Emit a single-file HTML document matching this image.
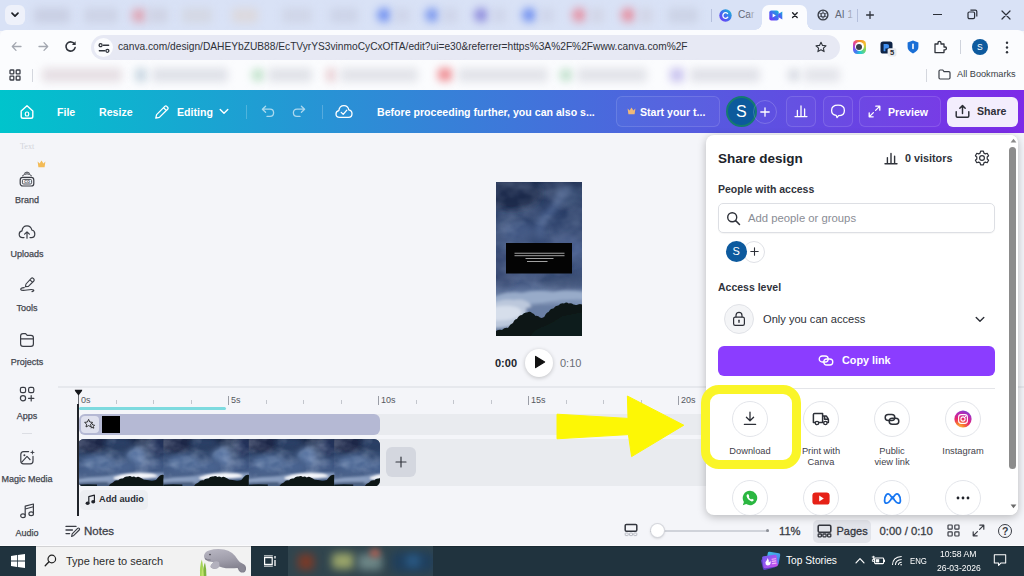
<!DOCTYPE html>
<html>
<head>
<meta charset="utf-8">
<style>
*{box-sizing:border-box;margin:0;padding:0}
html,body{width:1024px;height:576px;overflow:hidden}
body{font-family:"Liberation Sans",sans-serif;background:#f4f5f9;position:relative;color:#222}
.abs{position:absolute}
.t{position:absolute;white-space:nowrap;line-height:1}
/* browser chrome */
#tabbar{left:0;top:0;width:1024px;height:31px;background:#d9e2f6}
#toolbar{left:0;top:30px;width:1024px;height:31px;background:#fbfcfe;border-radius:6px 6px 0 0}
#bmbar{left:0;top:61px;width:1024px;height:29px;background:#fbfcfe}
#url{left:91px;top:34.5px;width:749px;height:25px;border-radius:12.5px;background:#e7e9f4}
.blur{position:absolute;filter:blur(4px);border-radius:4px}
/* canva header */
#chead{left:0;top:90px;width:1024px;height:43px;background:linear-gradient(90deg,#00c4cc 0%,#7d2ae8 100%)}
.hw{color:#fff;font-weight:bold;font-size:10.6px}
/* sidebar */
.sl{font-size:9px;color:#44474f;text-align:center;width:54px;left:0;-webkit-text-stroke:.25px #44474f}
/* taskbar */
#taskbar{left:0;top:546px;width:1024px;height:30px;background:#20333e;border-top:1px solid #1a2a33}
/* share panel */
#panel{left:706px;top:134.5px;width:312px;height:380.5px;background:#fff;border-radius:8px;box-shadow:0 2px 8px rgba(0,0,0,.25);overflow:hidden}
.ac{width:36px;height:36px;border-radius:18px;border:1px solid #e3e5ea;background:#fff}
.al{width:80px;text-align:center;font-size:9.3px;color:#3f424a}
.sx{transform-origin:0 50%}
.sb{-webkit-text-stroke:.3px currentColor}
</style>
</head>
<body>
<!-- ===== Browser chrome ===== -->
<div id="tabbar" class="abs"></div>
<!-- tab search button -->
<div class="abs" style="left:5px;top:5px;width:20px;height:20px;border-radius:6px;background:#eef1fa"></div>
<svg class="abs" style="left:10px;top:11px" width="10" height="8" viewBox="0 0 10 8"><path d="M2 2.2 L5 5.2 L8 2.2" fill="none" stroke="#1f2228" stroke-width="1.7" stroke-linecap="round" stroke-linejoin="round"/></svg>
<!-- blurred tabs -->
<div class="blur" style="left:34px;top:8px;width:36px;height:15px;background:#c9cfe3"></div>
<div class="blur" style="left:84px;top:8px;width:34px;height:15px;background:#cdd3e6"></div>
<div class="blur" style="left:132px;top:9px;width:14px;height:13px;background:#dfa7b6"></div>
<div class="blur" style="left:148px;top:8px;width:20px;height:15px;background:#cfd3e4"></div>
<div class="blur" style="left:182px;top:8px;width:30px;height:15px;background:#d4d8e4"></div>
<div class="blur" style="left:232px;top:8px;width:26px;height:15px;background:#dcd9de"></div>
<div class="blur" style="left:282px;top:8px;width:30px;height:15px;background:#d0d6e8"></div>
<div class="blur" style="left:330px;top:8px;width:28px;height:15px;background:#cdd4e8"></div>
<div class="blur" style="left:377px;top:8px;width:14px;height:14px;background:#6f8ff0;border-radius:7px"></div>
<div class="blur" style="left:394px;top:8px;width:16px;height:15px;background:#cfd5ea"></div>
<div class="blur" style="left:425px;top:8px;width:14px;height:14px;background:#7a97ee;border-radius:7px"></div>
<div class="blur" style="left:442px;top:8px;width:16px;height:15px;background:#cfd5ea"></div>
<div class="blur" style="left:474px;top:8px;width:14px;height:14px;background:#8d8bdc;border-radius:7px"></div>
<div class="blur" style="left:492px;top:8px;width:14px;height:15px;background:#cfd5ea"></div>
<div class="blur" style="left:522px;top:8px;width:14px;height:14px;background:#6f8ff0;border-radius:7px"></div>
<div class="blur" style="left:540px;top:8px;width:14px;height:15px;background:#cfd5ea"></div>
<div class="blur" style="left:572px;top:8px;width:14px;height:14px;background:#e592a4;border-radius:7px"></div>
<div class="blur" style="left:590px;top:8px;width:14px;height:15px;background:#d2d5e6"></div>
<div class="blur" style="left:621px;top:8px;width:14px;height:14px;background:#e68fa0;border-radius:7px"></div>
<div class="blur" style="left:639px;top:8px;width:14px;height:15px;background:#d2d5e6"></div>
<div class="blur" style="left:668px;top:8px;width:30px;height:15px;background:#ccd3e6"></div>
<!-- tab separators -->
<div class="abs" style="left:711px;top:9px;width:1px;height:13px;background:#b4bfdc"></div>
<div class="abs" style="left:857px;top:9px;width:1px;height:13px;background:#b4bfdc"></div>
<!-- tab "Car" -->
<svg class="abs" style="left:719px;top:9px" width="13" height="13" viewBox="0 0 13 13"><defs><linearGradient id="cg" x1="0" y1="1" x2="1" y2="0"><stop offset="0" stop-color="#7b2ff7"/><stop offset=".5" stop-color="#3f6ff0"/><stop offset="1" stop-color="#18c3cf"/></linearGradient></defs><circle cx="6.5" cy="6.5" r="6.2" fill="url(#cg)"/><path d="M8.6 4.6 A2.7 2.9 0 1 0 8.8 8.2" fill="none" stroke="#fff" stroke-width="1.3" stroke-linecap="round"/></svg>
<div class="t" style="left:738px;top:10px;font-size:10.2px;color:#626877">Car</div>
<div class="abs" style="left:748px;top:8px;width:8px;height:15px;background:linear-gradient(90deg,rgba(217,226,246,0),#d9e2f6)"></div>
<!-- active tab -->
<div class="abs" style="left:762px;top:5px;width:45px;height:26px;background:#fbfcfe;border-radius:7px 7px 0 0"></div>
<div class="abs" style="left:755px;top:23px;width:7px;height:7px;background:radial-gradient(circle at 0 0,rgba(0,0,0,0) 6.5px,#fbfcfe 7px)"></div>
<div class="abs" style="left:807px;top:23px;width:7px;height:7px;background:radial-gradient(circle at 100% 0,rgba(0,0,0,0) 6.5px,#fbfcfe 7px)"></div>
<svg class="abs" style="left:769px;top:10px" width="14" height="11" viewBox="0 0 14 11"><defs><linearGradient id="vg" x1="0" y1="1" x2="1" y2="0"><stop offset="0" stop-color="#7b2ff7"/><stop offset=".55" stop-color="#3f6ff0"/><stop offset="1" stop-color="#16b9d4"/></linearGradient></defs><rect x="0.3" y="0.6" width="9.4" height="9.8" rx="2" fill="url(#vg)"/><path d="M9.2 4 L13.3 1.4 V9.6 L9.2 7 Z" fill="url(#vg)"/><path d="M3.6 3.4 L6.8 5.5 L3.6 7.6 Z" fill="#fff"/></svg>
<svg class="abs" style="left:790px;top:10px" width="10" height="10" viewBox="0 0 10 10"><path d="M2.6 2.8 L7.2 7.4 M7.2 2.8 L2.6 7.4" stroke="#1f2228" stroke-width="1.4" stroke-linecap="round"/></svg>
<!-- tab "AI 1" -->
<svg class="abs" style="left:817px;top:9px" width="12" height="12" viewBox="0 0 12 12"><circle cx="6" cy="6" r="4.9" fill="none" stroke="#3b3f49" stroke-width="1.4"/><circle cx="6" cy="6" r="2" fill="none" stroke="#3b3f49" stroke-width="1.1"/><path d="M6 1 V4 M6 8 V11 M1.4 3.5 L4.2 5 M7.8 7 L10.6 8.5 M1.4 8.5 L4.2 7 M7.8 5 L10.6 3.5" stroke="#3b3f49" stroke-width=".8"/></svg>
<div class="t" style="left:835px;top:10px;font-size:10.2px;color:#626877">AI 1</div>
<div class="abs" style="left:846px;top:8px;width:8px;height:15px;background:linear-gradient(90deg,rgba(217,226,246,0),#d9e2f6)"></div>
<!-- new tab + -->
<svg class="abs" style="left:865px;top:10px" width="10" height="10" viewBox="0 0 10 10"><path d="M5 1.6 V8.4 M1.6 5 H8.4" stroke="#30343d" stroke-width="1.3" stroke-linecap="round"/></svg>
<!-- window controls -->
<div class="abs" style="left:933px;top:14px;width:9px;height:1.3px;background:#2b2f38"></div>
<svg class="abs" style="left:967px;top:9px" width="11" height="11" viewBox="0 0 11 11"><rect x="1" y="3" width="6.6" height="6.6" rx="1.3" fill="none" stroke="#2b2f38" stroke-width="1.2"/><path d="M3.4 1.2 H8.4 Q9.8 1.2 9.8 2.6 V7.4" fill="none" stroke="#2b2f38" stroke-width="1.2"/></svg>
<svg class="abs" style="left:1001px;top:10px" width="10" height="10" viewBox="0 0 10 10"><path d="M1 1 L9 9 M9 1 L1 9" stroke="#2b2f38" stroke-width="1.2" stroke-linecap="round"/></svg>

<div id="toolbar" class="abs"></div>
<div id="bmbar" class="abs"></div>
<!-- nav buttons -->
<svg class="abs" style="left:11px;top:41px" width="11" height="11" viewBox="0 0 11 11"><path d="M10 5.5 H1.5 M5 1.6 L1.3 5.5 L5 9.4" fill="none" stroke="#a3a7b0" stroke-width="1.3" stroke-linecap="round" stroke-linejoin="round"/></svg>
<svg class="abs" style="left:38px;top:41px" width="11" height="11" viewBox="0 0 11 11"><path d="M1 5.5 H9.5 M6 1.6 L9.7 5.5 L6 9.4" fill="none" stroke="#a3a7b0" stroke-width="1.3" stroke-linecap="round" stroke-linejoin="round"/></svg>
<svg class="abs" style="left:64px;top:40px" width="13" height="13" viewBox="0 0 13 13"><path d="M10.6 4.2 A4.6 4.6 0 1 0 11.1 7.6" fill="none" stroke="#2f333b" stroke-width="1.6" stroke-linecap="round"/><path d="M11.6 1.3 V5 H7.9 Z" fill="#2f333b"/></svg>
<div id="url" class="abs"></div>
<div class="abs" style="left:94px;top:38px;width:19px;height:19px;border-radius:10px;background:#fbfcfe"></div>
<svg class="abs" style="left:97.5px;top:41.5px" width="12" height="12" viewBox="0 0 12 12"><path d="M5.4 3.2 H10.6 M1.4 8.8 H6.6" stroke="#2f333b" stroke-width="1.5" stroke-linecap="round"/><circle cx="2.6" cy="3.2" r="1.5" fill="none" stroke="#2f333b" stroke-width="1.3"/><circle cx="9.4" cy="8.8" r="1.5" fill="none" stroke="#2f333b" stroke-width="1.3"/></svg>
<div class="t" style="left:118px;top:42px;font-size:10.2px;color:#2e3138">canva.com/design/DAHEYbZUB88/EcTVyrYS3vinmoCyCxOfTA/edit?ui=e30&amp;referrer=https%3A%2F%2Fwww.canva.com%2F</div>
<svg class="abs" style="left:815px;top:41px" width="12" height="12" viewBox="0 0 12 12"><path d="M6 1.2 L7.5 4.4 L11 4.8 L8.4 7.1 L9.1 10.6 L6 8.8 L2.9 10.6 L3.6 7.1 L1 4.8 L4.5 4.4 Z" fill="none" stroke="#2f333b" stroke-width="1.1" stroke-linejoin="round"/></svg>
<!-- extensions -->
<div class="abs" style="left:852.5px;top:40px;width:13.5px;height:13.5px;border-radius:4.2px;background:conic-gradient(from 0deg,#f5902a,#f2c230 18%,#7fd45a 32%,#25cfd0 48%,#3f7df0 60%,#8a4bf0 72%,#e83f8e 86%,#f5902a)"></div>
<div class="abs" style="left:854.6px;top:42.1px;width:9.3px;height:9.3px;border-radius:5px;background:#fff"></div>
<div class="abs" style="left:856.1px;top:43.6px;width:6.3px;height:6.3px;border-radius:4px;background:#3a3f4a"></div>
<svg class="abs" style="left:879.5px;top:40.5px" width="17" height="16" viewBox="0 0 17 16"><rect x=".5" y=".4" width="12" height="12.2" rx="2.6" fill="#0d2345"/><path d="M3.6 3 H6.8 Q9.2 3 9.2 5.2 Q9.2 7.4 6.8 7.4 H5.4 V10.2 H3.6 Z" fill="#3f8ff0"/><rect x="7.6" y="7.2" width="8.8" height="8.2" rx="1.6" fill="#e8eaee"/><text x="12" y="14.2" font-family="Liberation Sans" font-size="7.6" font-weight="bold" text-anchor="middle" fill="#26282e">5</text></svg>
<svg class="abs" style="left:907px;top:40px" width="12" height="14" viewBox="0 0 12 14"><path d="M6 .6 L11.4 2.6 V7 Q11.4 11 6 13.4 Q.6 11 .6 7 V2.6 Z" fill="#1a6fd6"/><rect x="5.2" y="3.6" width="1.6" height="5.6" rx=".8" fill="#fff"/></svg>
<svg class="abs" style="left:933px;top:40px" width="14" height="14" viewBox="0 0 14 14"><path d="M2 4 H5 V3 Q5 1.4 6.5 1.4 Q8 1.4 8 3 V4 H11 V7 H12 Q13.4 7 13.4 8.4 Q13.4 9.8 12 9.8 H11 V12.6 H2 Z" fill="none" stroke="#2f333b" stroke-width="1.3" stroke-linejoin="round"/></svg>
<div class="abs" style="left:960px;top:40px;width:1px;height:14px;background:#cfd3dc"></div>
<div class="abs" style="left:972px;top:39px;width:16px;height:16px;border-radius:8px;background:#0d5a9e"></div>
<div class="t" style="left:977px;top:43px;font-size:8.5px;color:#fff">S</div>
<svg class="abs" style="left:1005px;top:41px" width="4" height="13" viewBox="0 0 4 13"><circle cx="2" cy="1.8" r="1.2" fill="#2f333b"/><circle cx="2" cy="6.5" r="1.2" fill="#2f333b"/><circle cx="2" cy="11.2" r="1.2" fill="#2f333b"/></svg>
<!-- bookmarks bar -->
<svg class="abs" style="left:9px;top:69px" width="12" height="12" viewBox="0 0 12 12"><g fill="none" stroke="#3a3e47" stroke-width="1.3"><rect x="1" y="1" width="3.8" height="3.8" rx=".6"/><rect x="7.2" y="1" width="3.8" height="3.8" rx=".6"/><rect x="1" y="7.2" width="3.8" height="3.8" rx=".6"/><rect x="7.2" y="7.2" width="3.8" height="3.8" rx=".6"/></g></svg>
<div class="abs" style="left:32px;top:69px;width:1px;height:13px;background:#d4d7de"></div>
<div class="blur" style="left:42px;top:68px;width:80px;height:14px;background:#e6dfe4"></div>
<div class="blur" style="left:135px;top:68px;width:12px;height:14px;background:#c9d7e2"></div>
<div class="blur" style="left:152px;top:68px;width:76px;height:14px;background:#dfe1e8"></div>
<div class="blur" style="left:252px;top:69px;width:12px;height:12px;background:#bfe2c9"></div>
<div class="blur" style="left:268px;top:68px;width:44px;height:14px;background:#e0e2e8"></div>
<div class="blur" style="left:326px;top:68px;width:10px;height:14px;background:#e9cfd4"></div>
<div class="blur" style="left:340px;top:68px;width:78px;height:14px;background:#e2e3e9"></div>
<div class="blur" style="left:438px;top:68px;width:14px;height:13px;background:#ef8c92"></div>
<div class="blur" style="left:458px;top:68px;width:90px;height:14px;background:#e2e3e9"></div>
<div class="blur" style="left:560px;top:69px;width:12px;height:12px;background:#bfe0cb"></div>
<div class="blur" style="left:577px;top:68px;width:70px;height:14px;background:#e2e3e9"></div>
<div class="blur" style="left:670px;top:68px;width:14px;height:14px;background:#c9c3ee"></div>
<div class="blur" style="left:690px;top:68px;width:70px;height:14px;background:#e0e1e8"></div>
<div class="blur" style="left:788px;top:69px;width:12px;height:12px;background:#d7dae2"></div>
<div class="blur" style="left:804px;top:68px;width:36px;height:14px;background:#e3e4ea"></div>
<div class="abs" style="left:926px;top:69px;width:1px;height:13px;background:#d4d7de"></div>
<svg class="abs" style="left:938px;top:69px" width="13" height="11" viewBox="0 0 13 11"><path d="M1 2.2 Q1 1 2.2 1 H4.8 L6 2.6 H10.8 Q12 2.6 12 3.8 V8.8 Q12 10 10.8 10 H2.2 Q1 10 1 8.8 Z" fill="none" stroke="#3a3e47" stroke-width="1.2" stroke-linejoin="round"/></svg>
<div class="t" style="left:957px;top:70px;font-size:9.2px;color:#3a3e47">All Bookmarks</div>

<!-- ===== Canva header ===== -->
<div id="chead" class="abs"></div>
<!-- home -->
<svg class="abs" style="left:19px;top:104px" width="16" height="16" viewBox="0 0 16 16"><path d="M2.2 7 L8 1.8 L13.8 7 V12.4 Q13.8 14.2 12 14.2 H4 Q2.2 14.2 2.2 12.4 Z" fill="none" stroke="#fff" stroke-width="1.4" stroke-linejoin="round"/><rect x="6.3" y="8" width="3.4" height="4" rx="1.6" fill="none" stroke="#fff" stroke-width="1.2"/></svg>
<div class="t hw" style="left:57px;top:106.5px">File</div>
<div class="t hw" style="left:99px;top:106.5px">Resize</div>
<svg class="abs" style="left:154px;top:104px" width="16" height="16" viewBox="0 0 16 16"><path d="M1.8 14.2 L2.6 10.6 L10.8 2.4 Q11.8 1.4 12.8 2.4 L13.6 3.2 Q14.6 4.2 13.6 5.2 L5.4 13.4 Z M9.6 3.8 L12.2 6.4" fill="none" stroke="#fff" stroke-width="1.3" stroke-linejoin="round"/></svg>
<div class="t hw" style="left:177px;top:106.5px">Editing</div>
<svg class="abs" style="left:219px;top:108px" width="10" height="7" viewBox="0 0 10 7"><path d="M1.2 1.4 L5 5.2 L8.8 1.4" fill="none" stroke="#fff" stroke-width="1.4" stroke-linecap="round" stroke-linejoin="round"/></svg>
<div class="abs" style="left:246px;top:105px;width:1px;height:14px;background:rgba(255,255,255,.22)"></div>
<!-- undo / redo -->
<svg class="abs" style="left:261px;top:105px" width="14" height="13" viewBox="0 0 14 13"><path d="M4.6 1.2 L1.4 4.2 L4.6 7.2 M1.6 4.2 H9 Q12.6 4.2 12.6 7.8 Q12.6 11.4 9 11.4 H6" fill="none" stroke="rgba(255,255,255,.62)" stroke-width="1.3" stroke-linecap="round" stroke-linejoin="round"/></svg>
<svg class="abs" style="left:292px;top:105px" width="14" height="13" viewBox="0 0 14 13"><path d="M9.4 1.2 L12.6 4.2 L9.4 7.2 M12.4 4.2 H5 Q1.4 4.2 1.4 7.8 Q1.4 11.4 5 11.4 H8" fill="none" stroke="rgba(255,255,255,.62)" stroke-width="1.3" stroke-linecap="round" stroke-linejoin="round"/></svg>
<div class="abs" style="left:322px;top:105px;width:1px;height:14px;background:rgba(255,255,255,.22)"></div>
<!-- cloud check -->
<svg class="abs" style="left:335px;top:104px" width="18" height="15" viewBox="0 0 18 15"><path d="M4.6 13.4 Q1 13.4 1 10 Q1 7.2 3.8 6.6 Q4.4 1.6 9 1.6 Q13 1.6 13.8 5.8 Q17 6.4 17 9.8 Q17 13.4 13.4 13.4 Z" fill="none" stroke="#fff" stroke-width="1.3" stroke-linejoin="round"/><path d="M6.2 8.4 L8.2 10.4 L11.8 6.2" fill="none" stroke="#fff" stroke-width="1.3" stroke-linecap="round" stroke-linejoin="round"/></svg>
<div class="t hw" style="left:377px;top:106.5px">Before proceeding further, you can also s...</div>
<!-- start your trial -->
<div class="abs" style="left:616px;top:96px;width:104px;height:31px;border-radius:6px;border:1px solid rgba(255,255,255,.13);background:rgba(255,255,255,.03)"></div>
<svg class="abs" style="left:627px;top:107px" width="9" height="8" viewBox="0 0 9 8"><path d="M.6 1.6 L2.6 3.6 L4.5 .6 L6.4 3.6 L8.4 1.6 L7.6 7.2 H1.4 Z" fill="#f0b878"/></svg>
<div class="t hw" style="left:640px;top:106.5px">Start your t...</div>
<!-- avatar -->
<div class="abs" style="left:726.2px;top:96.3px;width:30.4px;height:30.4px;border-radius:16px;background:#0c5a9c;border:2px solid #157a70"></div>
<div class="t" style="left:736px;top:103.5px;font-size:16px;color:#fff">S</div>
<div class="abs" style="left:753px;top:100px;width:24px;height:24px;border-radius:12px;border:1px solid rgba(255,255,255,.18)"></div>
<svg class="abs" style="left:760px;top:107px" width="10" height="10" viewBox="0 0 10 10"><path d="M5 .8 V9.2 M.8 5 H9.2" stroke="#fff" stroke-width="1.3" stroke-linecap="round"/></svg>
<!-- chart btn -->
<div class="abs" style="left:786px;top:96px;width:30px;height:31px;border-radius:6px;border:1px solid rgba(255,255,255,.13);background:rgba(255,255,255,.03)"></div>
<svg class="abs" style="left:794px;top:104px" width="14" height="14" viewBox="0 0 14 14"><path d="M3.4 6.4 V12 M7 2 V12 M10.6 5 V12 M1 12.6 H13" stroke="#fff" stroke-width="1.3" stroke-linecap="round"/></svg>
<!-- comment btn -->
<div class="abs" style="left:823px;top:96px;width:30px;height:31px;border-radius:6px;border:1px solid rgba(255,255,255,.13);background:rgba(255,255,255,.03)"></div>
<svg class="abs" style="left:830px;top:104px" width="16" height="15" viewBox="0 0 16 15"><path d="M8 1.2 Q14.4 1.2 14.4 6.4 Q14.4 11.6 8.6 11.6 L7 13.6 L6.2 11.4 Q1.6 10.6 1.6 6.4 Q1.6 1.2 8 1.2 Z" fill="none" stroke="#fff" stroke-width="1.3" stroke-linejoin="round"/></svg>
<!-- preview btn -->
<div class="abs" style="left:859px;top:96px;width:82px;height:31px;border-radius:6px;border:1px solid rgba(255,255,255,.13);background:rgba(255,255,255,.03)"></div>
<svg class="abs" style="left:868px;top:105px" width="13" height="13" viewBox="0 0 13 13"><path d="M7.8 1.2 H11.8 V5.2 M11.6 1.4 L7.6 5.4 M5.2 11.8 H1.2 V7.8 M1.4 11.6 L5.4 7.6" fill="none" stroke="#fff" stroke-width="1.3" stroke-linecap="round" stroke-linejoin="round"/></svg>
<div class="t hw" style="left:888px;top:106.5px">Preview</div>
<!-- share btn -->
<div class="abs" style="left:947px;top:97px;width:71px;height:29.5px;border-radius:6px;background:#f3edfd"></div>
<svg class="abs" style="left:954.5px;top:104px" width="15" height="15" viewBox="0 0 15 15"><path d="M7.5 9.4 V1.6 M4.8 4.2 L7.5 1.4 L10.2 4.2 M1.2 7.6 V12 Q1.2 13.2 2.4 13.2 H12.6 Q13.8 13.2 13.8 12 V7.6" fill="none" stroke="#2b2d35" stroke-width="1.45" stroke-linecap="round" stroke-linejoin="round"/></svg>
<div class="t" style="left:977px;top:106.3px;font-size:10.6px;font-weight:bold;color:#2e3038">Share</div>

<!-- ===== Sidebar ===== -->
<div class="t" style="left:20px;top:142.5px;font-size:8px;color:#d2d4da;font-family:'Liberation Serif',serif">Text</div>
<svg class="abs" style="left:37.2px;top:160px" width="9" height="8" viewBox="0 0 9 8"><path d="M.6 1.6 L2.6 3.6 L4.5 .6 L6.4 3.6 L8.4 1.6 L7.6 7.2 H1.4 Z" fill="#f3bb57"/></svg>
<!-- brand -->
<svg class="abs" style="left:19px;top:171px;overflow:visible" width="16" height="17" viewBox="0 0 16 17"><path d="M3.2 5 Q8 .6 12.8 5 M5.2 2.4 Q8 -.4 10.8 2.4" fill="none" stroke="#3a3d45" stroke-width="1"/><rect x="1.2" y="6.4" width="13.6" height="8.6" rx="2.6" fill="none" stroke="#3a3d45" stroke-width="1.2"/><rect x="3.4" y="8.4" width="9.2" height="4.6" rx="1.2" fill="none" stroke="#3a3d45" stroke-width=".9"/><text x="8" y="12.2" font-family="Liberation Sans" font-size="3.8" font-weight="bold" text-anchor="middle" fill="#3a3d45">CO</text></svg>
<div class="t sl" style="top:196px">Brand</div>
<!-- uploads -->
<svg class="abs" style="left:18px;top:224px" width="18" height="16" viewBox="0 0 18 16"><path d="M6 13.6 H4.6 Q1.2 13.6 1.2 10.2 Q1.2 7.4 4 6.8 Q4.6 1.8 9 1.8 Q13 1.8 13.8 6 Q16.8 6.6 16.8 10 Q16.8 13.6 13.4 13.6 H12" fill="none" stroke="#3a3d45" stroke-width="1.2" stroke-linecap="round"/><path d="M9 14.2 V8 M6.6 10.2 L9 7.8 L11.4 10.2" fill="none" stroke="#3a3d45" stroke-width="1.2" stroke-linecap="round" stroke-linejoin="round"/></svg>
<div class="t sl" style="top:250px">Uploads</div>
<!-- tools -->
<svg class="abs" style="left:19px;top:276px" width="17" height="18" viewBox="0 0 17 18"><path d="M6.4 10.6 L7 8 L12.2 2.4 Q13.2 1.4 14.2 2.4 L14.8 3 Q15.8 4 14.8 5 L9.4 10.4 Z M11 3.8 L13.4 6.2" fill="none" stroke="#3a3d45" stroke-width="1.1" stroke-linejoin="round"/><path d="M5.2 11.6 Q1.2 12 1.8 13.6 Q2.6 15 8 14 Q13.4 13 14.6 14 Q15.4 15 13 15.6" fill="none" stroke="#3a3d45" stroke-width="1.2" stroke-linecap="round"/></svg>
<div class="t sl" style="top:304px">Tools</div>
<!-- projects -->
<svg class="abs" style="left:19px;top:332px" width="16" height="16" viewBox="0 0 16 16"><path d="M1.6 4 Q1.6 1.6 4 1.6 H6.6 L8.2 3.4 H12 Q14.4 3.4 14.4 5.8 V12 Q14.4 14.4 12 14.4 H4 Q1.6 14.4 1.6 12 Z M1.6 6.8 H14.4" fill="none" stroke="#3a3d45" stroke-width="1.2" stroke-linejoin="round"/></svg>
<div class="t sl" style="top:358px">Projects</div>
<!-- apps -->
<svg class="abs" style="left:19px;top:386px" width="17" height="17" viewBox="0 0 17 17"><g fill="none" stroke="#3a3d45" stroke-width="1.2"><rect x="1.4" y="1.4" width="5.2" height="5.2" rx="1.6"/><rect x="9.6" y="1.4" width="5.2" height="5.2" rx="1.6"/><rect x="1.4" y="9.6" width="5.2" height="5.2" rx="2.6"/><path d="M12.2 9.6 V15 M9.5 12.3 H14.9" stroke-linecap="round"/></g></svg>
<div class="t sl" style="top:412px">Apps</div>
<div class="abs" style="left:22px;top:433px;width:10px;height:1px;background:#dcdee4"></div>
<!-- magic media -->
<svg class="abs" style="left:19px;top:449px" width="17" height="17" viewBox="0 0 17 17"><path d="M9.6 2.6 H4.6 Q1.8 2.6 1.8 5.4 V12 Q1.8 14.8 4.6 14.8 H11.2 Q14 14.8 14 12 V7.4" fill="none" stroke="#3a3d45" stroke-width="1.2" stroke-linecap="round"/><path d="M2.6 13.4 L8 7.4 L11.4 11 " fill="none" stroke="#3a3d45" stroke-width="1.1" stroke-linejoin="round"/><circle cx="5.4" cy="6.2" r="1" fill="#3a3d45"/><path d="M13.4 .8 L14 2.8 L16 3.4 L14 4 L13.4 6 L12.8 4 L10.8 3.4 L12.8 2.8 Z" fill="#3a3d45"/></svg>
<div class="t sl" style="top:475px">Magic Media</div>
<!-- audio -->
<svg class="abs" style="left:19px;top:502px" width="17" height="18" viewBox="0 0 17 18"><path d="M6.2 13.6 V4.2 L14.4 2 V11.6" fill="none" stroke="#3a3d45" stroke-width="1.2" stroke-linejoin="round"/><path d="M6.2 7 L14.4 4.8" stroke="#3a3d45" stroke-width="1.1"/><ellipse cx="4" cy="13.8" rx="2.3" ry="1.9" fill="none" stroke="#3a3d45" stroke-width="1.2"/><ellipse cx="12.2" cy="11.8" rx="2.3" ry="1.9" fill="none" stroke="#3a3d45" stroke-width="1.2"/></svg>
<div class="t sl" style="top:529px">Audio</div>

<!-- ===== Canvas preview ===== -->
<svg class="abs" style="left:496px;top:182px" width="86" height="154" viewBox="0 0 86 154">
<defs>
<linearGradient id="sky" x1="0" y1="0" x2="0" y2="1"><stop offset="0" stop-color="#1f2f52"/><stop offset=".2" stop-color="#2b3f68"/><stop offset=".45" stop-color="#3a4f7a"/><stop offset=".64" stop-color="#3d517b"/><stop offset=".73" stop-color="#6c81a8"/><stop offset=".8" stop-color="#8296b8"/><stop offset=".9" stop-color="#6d82a6"/><stop offset="1" stop-color="#4a5e80"/></linearGradient>
<filter id="bl" x="-30%" y="-30%" width="160%" height="160%"><feGaussianBlur stdDeviation="3"/></filter>
<filter id="bl2" x="-20%" y="-20%" width="140%" height="140%"><feGaussianBlur stdDeviation=".55"/></filter>
<filter id="bl3" x="-30%" y="-30%" width="160%" height="160%"><feGaussianBlur stdDeviation="1.8"/></filter>
<filter id="tex" x="0" y="0" width="100%" height="100%"><feTurbulence type="fractalNoise" baseFrequency=".035 .05" numOctaves="3" seed="7"/><feColorMatrix type="matrix" values="0 0 0 0 .62  0 0 0 0 .72  0 0 0 0 .9  1.6 0 0 0 -.62"/><feGaussianBlur stdDeviation=".6"/></filter>
<filter id="texd" x="0" y="0" width="100%" height="100%"><feTurbulence type="fractalNoise" baseFrequency=".03 .04" numOctaves="2" seed="21"/><feColorMatrix type="matrix" values="0 0 0 0 .08  0 0 0 0 .12  0 0 0 0 .24  0 1.8 0 0 -.7"/></filter>
<clipPath id="pc"><rect width="86" height="154"/></clipPath>
</defs>
<g clip-path="url(#pc)">
<rect width="86" height="154" fill="url(#sky)"/>
<g filter="url(#bl)">
<ellipse cx="16" cy="12" rx="30" ry="16" fill="#1c2b4c"/>
<ellipse cx="72" cy="14" rx="14" ry="10" fill="#33486f"/>
<path d="M70 6 Q60 26 50 34 Q40 44 46 56" fill="none" stroke="#4d6592" stroke-width="7"/>
<ellipse cx="22" cy="50" rx="16" ry="10" fill="#425984"/>
<ellipse cx="8" cy="86" rx="14" ry="18" fill="#2e416a"/>
<ellipse cx="66" cy="98" rx="24" ry="8" fill="#34486f"/>
<ellipse cx="70" cy="66" rx="16" ry="12" fill="#43598a"/>
</g>
<rect width="86" height="154" filter="url(#tex)" opacity=".32"/>
<rect width="86" height="154" filter="url(#texd)" opacity=".6"/>
<g filter="url(#bl3)">
<path d="M-4 116 Q10 108 26 111 Q40 107 56 110 Q70 107 90 110 V118 Q70 117 54 120 Q38 123 26 121 Q10 124 -4 124 Z" fill="#98abc9"/>
<path d="M-4 122 Q6 116 18 118 Q28 116 34 122 Q38 130 30 138 Q18 146 -4 146 Z" fill="#bcc8dc"/>
<path d="M-4 126 Q8 122 20 125 Q28 128 24 134 Q12 140 -4 138 Z" fill="#d6deeb"/>
<path d="M30 126 Q50 122 90 122 V134 Q50 134 30 136 Z" fill="#6a7fa4"/>
</g>
<g filter="url(#bl2)">
<path d="M0 154 V149 Q3 147 6 148 Q9 145 12 146 Q14 142 17 141 Q18.5 137 21 137 Q23 133 26 133 Q28 130 31 130.6 Q34 128.6 36 131 Q38 131.6 39.6 134 Q42 133.4 44 135.6 Q46.6 136.6 48.6 134.6 Q50 130.6 52.6 130 Q54.4 126.6 57.4 126.6 Q59.6 123.4 62.4 123.6 Q65 120.4 68 121.4 Q70.4 119.6 72.6 121.4 Q75.4 120.6 77.4 122.6 Q80 123.6 82 122.4 Q84 121.4 86 122.4 V154 Z" fill="#0c1516"/>
<path d="M34 154 Q40 146 48 144 Q58 140 66 134 L86 130 V154 Z" fill="#17241f" opacity=".45"/>
</g>
<rect x="10" y="61" width="66" height="30.5" fill="#040404"/>
<g fill="#d6d6d6"><rect x="18.5" y="70.8" width="50" height=".75"/><rect x="18.5" y="73.4" width="50" height=".75"/><rect x="29.5" y="76.2" width="28" height=".75"/><rect x="31" y="79" width="20.5" height=".75"/></g>
</g>
</svg>
<div class="t" style="left:495px;top:357.5px;font-size:11px;font-weight:bold;color:#20232a">0:00</div>
<div class="abs" style="left:525px;top:348.5px;width:28px;height:28px;border-radius:14px;background:#fff;box-shadow:0 1px 4px rgba(0,0,0,.22)"></div>
<svg class="abs" style="left:534px;top:355px" width="12" height="14" viewBox="0 0 12 14"><path d="M1.6 1.4 L10.6 7 L1.6 12.6 Z" fill="#111" stroke="#111" stroke-width="1.2" stroke-linejoin="round"/></svg>
<div class="t" style="left:560px;top:357.5px;font-size:11px;color:#6a6d75">0:10</div>

<!-- ===== Timeline ===== -->
<div class="abs" style="left:58px;top:386px;width:966px;height:2px;background:#e6e8ed"></div>
<div class="abs" style="left:78.0px;top:396px;width:1px;height:9px;background:#9a9da6"></div><div class="t" style="left:81.0px;top:396px;font-size:9px;color:#55585f">0s</div><div class="abs" style="left:115.5px;top:400px;width:1px;height:4px;background:#c3c6cd"></div><div class="abs" style="left:153.0px;top:400px;width:1px;height:4px;background:#c3c6cd"></div><div class="abs" style="left:190.5px;top:400px;width:1px;height:4px;background:#c3c6cd"></div><div class="abs" style="left:228.0px;top:396px;width:1px;height:9px;background:#9a9da6"></div><div class="t" style="left:231.0px;top:396px;font-size:9px;color:#55585f">5s</div><div class="abs" style="left:265.5px;top:400px;width:1px;height:4px;background:#c3c6cd"></div><div class="abs" style="left:303.0px;top:400px;width:1px;height:4px;background:#c3c6cd"></div><div class="abs" style="left:340.5px;top:400px;width:1px;height:4px;background:#c3c6cd"></div><div class="abs" style="left:378.0px;top:396px;width:1px;height:9px;background:#9a9da6"></div><div class="t" style="left:381.0px;top:396px;font-size:9px;color:#55585f">10s</div><div class="abs" style="left:415.5px;top:400px;width:1px;height:4px;background:#c3c6cd"></div><div class="abs" style="left:453.0px;top:400px;width:1px;height:4px;background:#c3c6cd"></div><div class="abs" style="left:490.5px;top:400px;width:1px;height:4px;background:#c3c6cd"></div><div class="abs" style="left:528.0px;top:396px;width:1px;height:9px;background:#9a9da6"></div><div class="t" style="left:531.0px;top:396px;font-size:9px;color:#55585f">15s</div><div class="abs" style="left:565.5px;top:400px;width:1px;height:4px;background:#c3c6cd"></div><div class="abs" style="left:603.0px;top:400px;width:1px;height:4px;background:#c3c6cd"></div><div class="abs" style="left:640.5px;top:400px;width:1px;height:4px;background:#c3c6cd"></div><div class="abs" style="left:678.0px;top:396px;width:1px;height:9px;background:#9a9da6"></div><div class="t" style="left:681.0px;top:396px;font-size:9px;color:#55585f">20s</div>
<div class="abs" style="left:79px;top:407.4px;width:147px;height:3px;background:#7ddadf;border-radius:1.5px"></div>
<!-- track bgs -->
<div class="abs" style="left:79px;top:414px;width:640px;height:21px;background:#e9ebef;border-radius:6px 0 0 6px"></div>
<div class="abs" style="left:79px;top:439px;width:640px;height:47px;background:#e9ebef;border-radius:6px 0 0 6px"></div>
<!-- text track -->
<div class="abs" style="left:79px;top:414px;width:301px;height:21px;background:#b5b9d4;border-radius:6px"></div>
<div class="abs" style="left:81px;top:416px;width:18px;height:17px;background:#dfe1ee;border-radius:4px"></div>
<svg class="abs" style="left:84px;top:418px" width="12" height="12" viewBox="0 0 12 12"><path d="M4.6 1.4 L5.8 4 L8.6 4.4 L6.6 6.2 L7.2 9 L4.6 7.6 L2 9 L2.6 6.2 L.6 4.4 L3.4 4 Z" fill="none" stroke="#222" stroke-width=".9" stroke-linejoin="round"/><path d="M8 5.4 L8.8 7 L10.6 7.2 L9.4 8.4 L9.8 10.2 L8 9.4 L6.8 10" fill="none" stroke="#222" stroke-width=".9" stroke-linejoin="round"/></svg>
<div class="abs" style="left:102px;top:416px;width:18px;height:17px;background:#000"></div>
<!-- video track -->
<svg class="abs" style="left:78px;top:438.5px" width="302" height="47.5" viewBox="0 0 302 47.5">
<defs>
<clipPath id="vc"><rect width="302" height="47.5" rx="6"/></clipPath>
<clipPath id="fc"><rect width="86.4" height="47.5"/></clipPath>
<linearGradient id="fs" x1="0" y1="0" x2="0" y2="1"><stop offset="0" stop-color="#1c2a48"/><stop offset=".3" stop-color="#33496f"/><stop offset=".6" stop-color="#435b86"/><stop offset=".8" stop-color="#4d648c"/><stop offset="1" stop-color="#33445f"/></linearGradient>
<filter id="fb" x="-20%" y="-40%" width="140%" height="180%"><feGaussianBlur stdDeviation="2.4"/></filter>
<filter id="fb2" x="-20%" y="-40%" width="140%" height="180%"><feGaussianBlur stdDeviation=".8"/></filter><filter id="fb3" x="-20%" y="-40%" width="140%" height="180%"><feGaussianBlur stdDeviation=".35"/></filter>
<filter id="ftex" x="0" y="0" width="100%" height="100%"><feTurbulence type="fractalNoise" baseFrequency=".05 .07" numOctaves="3" seed="4"/><feColorMatrix type="matrix" values="0 0 0 0 .72  0 0 0 0 .8  0 0 0 0 .95  1.7 0 0 0 -.65"/><feGaussianBlur stdDeviation=".5"/></filter>
<g id="frame" clip-path="url(#fc)">
<rect width="87" height="47.5" fill="url(#fs)"/>
<g filter="url(#fb)">
<ellipse cx="12" cy="5" rx="16" ry="9" fill="#1b2846"/>
<ellipse cx="80" cy="8" rx="10" ry="9" fill="#22325a"/>
<ellipse cx="40" cy="4" rx="14" ry="5" fill="#2b3f66"/>
<ellipse cx="57" cy="15" rx="9" ry="6" fill="#5f7aa6" transform="rotate(-30 57 15)"/><ellipse cx="61" cy="19" rx="6" ry="8" fill="#5a75a2"/>
<ellipse cx="20" cy="24" rx="16" ry="8" fill="#506a96"/>
<ellipse cx="76" cy="27" rx="10" ry="5" fill="#3a5280"/>
<ellipse cx="44" cy="28" rx="12" ry="5" fill="#4a6490"/>
</g>
<rect width="87" height="47.5" filter="url(#ftex)" opacity=".34"/>
<g filter="url(#fb2)">
<path d="M-2 40 Q10 37.5 24 37.4 Q34 37 42 35 Q54 33 66 33.6 Q76 34 88 34 V40 Q72 40 60 40 Q40 42 24 41.6 Q10 43 -2 44 Z" fill="#8398bb"/>
<path d="M36 38.4 Q44 35.4 52 34.6 Q62 33.4 72 34.6 Q78 35.4 80 37.6 Q66 40 56 40 Q44 41 36 40.6 Z" fill="#f4f6fb"/>
<path d="M-2 40.6 Q14 38.6 36 39.4 L36 45 H-2 Z" fill="#8ea3c4" opacity=".8"/>
<path d="M-2 44 Q14 42.6 30 43 L30 48 H-2 Z" fill="#4a5e80"/>
</g>
<path d="M-1 48 V45.8 Q8 44.8 19 45.6 L19 48 Z" fill="#111b22" filter="url(#fb3)"/>
<path d="M30 48 Q32 44.5 35 43.6 Q37 41 40 41.4 Q42 39 45 39.6 Q47 37 50 37.6 Q52 36.4 54 38 Q56 36.8 58 38.6 Q60 37 62 38.6 Q64 39.6 66 40.8 Q69 41 72 41.6 Q75 42 78 41 Q80 38 82 36.4 Q84 35.4 86 36 V48 Z" fill="#0b1416" filter="url(#fb3)"/>
</g>
</defs>
<g clip-path="url(#vc)">
<use href="#frame" x="0"/><use href="#frame" x="85.4"/><use href="#frame" x="170.8"/><use href="#frame" x="256.2"/>
</g>
</svg>
<!-- plus -->
<div class="abs" style="left:386px;top:447px;width:30px;height:30px;background:#d4d7df;border-radius:6px"></div>
<svg class="abs" style="left:395px;top:456px" width="12" height="12" viewBox="0 0 12 12"><path d="M6 1 V11 M1 6 H11" stroke="#33363e" stroke-width="1.2" stroke-linecap="round"/></svg>
<!-- playhead -->
<div class="abs" style="left:77px;top:404px;width:2px;height:112px;background:#20232a"></div><div class="abs" style="left:77.5px;top:394px;width:1px;height:10px;background:#6a6d75"></div>
<svg class="abs" style="left:74px;top:389px" width="9" height="7" viewBox="0 0 9 7"><path d="M.8 .8 H8.2 Q8.6 2 4.5 6.4 Q.4 2 .8 .8 Z" fill="#15171c"/></svg>
<!-- add audio -->
<div class="abs" style="left:80px;top:490px;width:68px;height:20px;background:#eceef2;border-radius:5px"></div>
<svg class="abs" style="left:85px;top:494px" width="11" height="12" viewBox="0 0 11 12"><path d="M3.8 9 V2.6 L9.4 1.2 V7.6" fill="none" stroke="#20232a" stroke-width="1.2" stroke-linejoin="round"/><ellipse cx="2.6" cy="9.2" rx="2" ry="1.7" fill="#20232a"/><ellipse cx="8.2" cy="7.8" rx="2" ry="1.7" fill="#20232a"/></svg>
<div class="t" style="left:99px;top:495px;font-size:9.2px;font-weight:bold;color:#2a2d34">Add audio</div>

<!-- ===== Bottom bar ===== -->
<svg class="abs" style="left:65px;top:524px" width="16" height="14" viewBox="0 0 16 14"><path d="M1 2.4 H11 M1 6 H7.4 M1 9.6 H4.6" stroke="#3a3d45" stroke-width="1.3" stroke-linecap="round"/><path d="M6.6 12.4 L7.2 9.8 L12.6 4.4 Q13.4 3.6 14.2 4.4 Q15 5.2 14.2 6 L8.8 11.4 Z" fill="none" stroke="#3a3d45" stroke-width="1.1" stroke-linejoin="round"/></svg>
<div class="t sb" style="left:84px;top:525.7px;font-size:11.5px;color:#3f424a">Notes</div>
<svg class="abs" style="left:624px;top:523px" width="14" height="14" viewBox="0 0 14 14"><rect x="1.2" y="1.4" width="11.6" height="6.8" rx="1.2" fill="none" stroke="#33363e" stroke-width="1.5"/><g fill="none" stroke="#b9bcc4" stroke-width="1"><rect x="1.2" y="10" width="3" height="2.6" rx=".5"/><rect x="5.5" y="10" width="3" height="2.6" rx=".5"/><rect x="9.8" y="10" width="3" height="2.6" rx=".5"/></g></svg>
<div class="abs" style="left:650px;top:530px;width:119px;height:1.5px;background:#d0d3da"></div>
<div class="abs" style="left:650px;top:529px;width:3px;height:3px;border-radius:2px;background:#8b8e96"></div>
<div class="abs" style="left:766px;top:529px;width:3px;height:3px;border-radius:2px;background:#8b8e96"></div>
<div class="abs" style="left:651px;top:524px;width:13px;height:13px;border-radius:7px;background:#fff;box-shadow:0 0 0 1px #d5d7dd,0 1px 3px rgba(0,0,0,.25)"></div>
<div class="t sb" style="left:779px;top:525.8px;font-size:11.2px;color:#3a3d45">11%</div>
<div class="abs" style="left:813px;top:520px;width:58px;height:23px;border-radius:5px;background:#e2e4ea"></div>
<svg class="abs" style="left:817px;top:524px" width="15" height="14" viewBox="0 0 15 14"><rect x="1.2" y="1.2" width="12.6" height="7" rx="1.2" fill="none" stroke="#33363e" stroke-width="1.6"/><g fill="none" stroke="#33363e" stroke-width="1.3"><rect x="1.2" y="10" width="3.2" height="2.8" rx=".5"/><rect x="5.9" y="10" width="3.2" height="2.8" rx=".5"/><rect x="10.6" y="10" width="3.2" height="2.8" rx=".5"/></g></svg>
<div class="t sb" style="left:836.5px;top:525.8px;font-size:11px;color:#33363e">Pages</div>
<div class="t sb" style="left:879.5px;top:525.8px;font-size:11.3px;color:#3a3d45">0:00 / 0:10</div>
<svg class="abs" style="left:947px;top:524px" width="13" height="13" viewBox="0 0 13 13"><g fill="none" stroke="#3a3d45" stroke-width="1.2"><rect x="1" y="1" width="4.2" height="4.2" rx=".8"/><rect x="7.8" y="1" width="4.2" height="4.2" rx=".8"/><rect x="1" y="7.8" width="4.2" height="4.2" rx=".8"/><rect x="7.8" y="7.8" width="4.2" height="4.2" rx=".8"/></g></svg>
<svg class="abs" style="left:972px;top:524px" width="13" height="13" viewBox="0 0 13 13"><path d="M7.8 1.2 H11.8 V5.2 M11.6 1.4 L7.6 5.4 M5.2 11.8 H1.2 V7.8 M1.4 11.6 L5.4 7.6" fill="none" stroke="#3a3d45" stroke-width="1.2" stroke-linecap="round" stroke-linejoin="round"/></svg>
<div class="abs" style="left:998px;top:524px;width:14px;height:14px;border-radius:7px;border:1.2px solid #3a3d45"></div>
<div class="t" style="left:1002px;top:526px;font-size:10.5px;font-weight:bold;color:#3a3d45">?</div>

<!-- ===== Taskbar ===== -->
<div id="taskbar" class="abs"></div>
<div class="abs" style="left:0;top:544.5px;width:1024px;height:1.5px;background:#fbfbfd"></div>
<svg class="abs" style="left:11px;top:554px" width="14" height="14" viewBox="0 0 14 14"><path d="M0 2 L6 1.1 V6.6 H0 Z M6.8 1 L14 0 V6.6 H6.8 Z M0 7.4 H6 V12.9 L0 12 Z M6.8 7.4 H14 V14 L6.8 13 Z" fill="#fff"/></svg>
<div class="abs" style="left:36px;top:546px;width:215px;height:30px;background:#f2f2f2;border-top:1px solid #d2d2d4"></div>
<svg class="abs" style="left:44px;top:554px" width="13" height="13" viewBox="0 0 13 13"><circle cx="7.8" cy="5" r="3.8" fill="none" stroke="#222" stroke-width="1.2"/><path d="M5 7.8 L1.2 11.8" stroke="#222" stroke-width="1.3" stroke-linecap="round"/></svg>
<div class="t" style="left:66px;top:555.5px;font-size:11px;color:#2c2c2c">Type here to search</div>
<!-- manatee -->
<svg class="abs" style="left:196px;top:546px" width="56" height="30" viewBox="196 546 56 30">
<defs><linearGradient id="mg" x1="0" y1="0" x2=".3" y2="1"><stop offset="0" stop-color="#bab8c4"/><stop offset=".55" stop-color="#a09eab"/><stop offset="1" stop-color="#807e8b"/></linearGradient></defs>
<path d="M200 576 Q199.6 566 201.8 559.6 Q203.4 566 203.6 576 Z" fill="#a4d455"/><path d="M202.6 576 Q203 567 205 562.6 Q206.4 568 206.4 576 Z" fill="#7fb53f"/><path d="M201.4 576 Q201.8 570 202.8 566 Q203.6 570 203.8 576 Z" fill="#c1e36d"/>
<path d="M204 556 Q204.5 551.5 209 550.4 Q216 548.2 224 549.4 Q233 551 238 560 Q239.6 562.6 242.4 563.4 Q246.6 565 246 569.4 Q245 573.4 241 572.4 Q238.4 571 237.6 568 Q232 568.6 226 568.2 Q222 568 219.4 566.6 Q217 569.4 213 568.6 Q209.6 567.6 211 565 Q212.6 563.6 213.4 562 Q209 562.4 205.6 560 Q203.8 558.4 204 556 Z" fill="url(#mg)"/>
<path d="M213.4 562 Q216 560.6 219 562 Q219.6 564.6 219.4 566.6 Q217 569.4 213 568.6 Q209.6 567.6 211 565 Q212.6 563.6 213.4 562 Z" fill="#b3b1bd"/>
<path d="M240 564 Q245 565.6 245 569.4 Q244.4 572.4 241.4 571.6 Q239 570 238.6 567 Z" fill="#8a8895"/>
<circle cx="210" cy="554.6" r=".8" fill="#3a3842"/>
<path d="M205 558.6 Q207.4 560.6 210.6 560" fill="none" stroke="#6a6874" stroke-width=".8"/>
</svg>
<!-- task view -->
<svg class="abs" style="left:263px;top:555px" width="14" height="12" viewBox="0 0 14 12"><rect x="1.6" y="2.6" width="7.6" height="6.8" fill="none" stroke="#fff" stroke-width="1.2"/><path d="M1 .9 H9.8 M1 11.1 H9.8" stroke="#fff" stroke-width="1"/><path d="M12 1 V3.4 M12 5 V11" stroke="#fff" stroke-width="1.3"/></svg>
<!-- blurred task icons -->
<div class="abs" style="left:288px;top:546px;width:145px;height:30px;background:#31454e;overflow:hidden">
<div class="blur" style="left:10px;top:8px;width:16px;height:16px;background:#7a3a28;filter:blur(4px)"></div>
<div class="blur" style="left:44px;top:7px;width:22px;height:16px;background:#9aa56a;filter:blur(4px)"></div>
<div class="blur" style="left:70px;top:8px;width:24px;height:16px;background:#6e8787;filter:blur(4px)"></div>
<div class="blur" style="left:82px;top:3px;width:10px;height:8px;background:#b35f52;filter:blur(3px)"></div>
<div class="blur" style="left:104px;top:6px;width:42px;height:20px;background:#1f3f5e;filter:blur(5px)"></div>
<div class="blur" style="left:118px;top:9px;width:14px;height:12px;background:#2b5b86;filter:blur(4px)"></div>
</div>
<!-- top stories -->
<svg class="abs" style="left:760px;top:550px" width="22" height="22" viewBox="0 0 22 22"><defs><linearGradient id="ts1" x1="0" y1="0" x2="1" y2="1"><stop offset="0" stop-color="#3fc0e6"/><stop offset="1" stop-color="#4a73ee"/></linearGradient><linearGradient id="ts2" x1="0" y1="0" x2="1" y2="1"><stop offset="0" stop-color="#6f5cf0"/><stop offset="1" stop-color="#cf4fee"/></linearGradient></defs><rect x="7" y="2.4" width="12.6" height="12" rx="1.6" fill="url(#ts1)" transform="rotate(10 13 8)"/><rect x="2" y="8" width="13" height="11" rx="1.6" fill="#5b3fc0" transform="rotate(-14 8 14)"/><rect x="2.6" y="5.4" width="14.6" height="12" rx="1.6" fill="url(#ts2)" transform="rotate(-8 10 11)"/><path d="M7.2 8 Q9.6 10 8.8 12.4 Q10.2 12 10 10.6 Q11.6 13 9.6 15 Q7.2 16 5.8 14.4 Q4.6 12.4 6.6 10.6 Q7.6 9.6 7.2 8 Z" fill="#fff"/><path d="M12 9.2 L15.6 8.7 M12.2 11.4 L15.8 10.9 M12.4 13.6 L16 13.1" stroke="#f0b8f6" stroke-width="1.1" stroke-linecap="round"/></svg>
<div class="t" style="left:786px;top:556.3px;font-size:10.2px;color:#fff">Top Stories</div>
<svg class="abs" style="left:855px;top:557px" width="10" height="7" viewBox="0 0 10 7"><path d="M1 5.8 L5 1.6 L9 5.8" fill="none" stroke="#fff" stroke-width="1.2" stroke-linecap="round" stroke-linejoin="round"/></svg>
<svg class="abs" style="left:871px;top:555px" width="15" height="11" viewBox="0 0 15 11"><rect x="3.6" y="3" width="9" height="5.6" rx=".8" fill="none" stroke="#fff" stroke-width="1.1"/><rect x="12.8" y="4.6" width="1.2" height="2.4" fill="#fff"/><rect x="4.8" y="4.2" width="3.4" height="3.2" fill="#fff"/><path d="M2.4 .8 V4.6 M.8 2 H4 M1.4 4.6 H3.4 V6.4 H1.4 Z" stroke="#fff" stroke-width=".9" fill="none"/></svg>
<svg class="abs" style="left:891px;top:555px" width="12" height="11" viewBox="0 0 13 12"><path d="M1.6 11 Q1.6 2 11.6 1.6" fill="none" stroke="#fff" stroke-width="1.1"/><path d="M4.8 11 Q4.8 5 11.6 4.8" fill="none" stroke="#fff" stroke-width="1.1"/><path d="M8 11 Q8 8.2 11.6 8" fill="none" stroke="#fff" stroke-width="1.1"/><circle cx="11" cy="10.6" r=".9" fill="#fff"/></svg>
<div class="t sx" style="left:909.5px;top:556px;font-size:9.5px;color:#fff;transform:scaleX(.82)">ENG</div>
<div class="t sx" style="left:940px;top:549.5px;font-size:9.3px;color:#fff;transform:scaleX(.93)">10:58 AM</div>
<div class="t sx" style="left:936.5px;top:563.5px;font-size:9.3px;color:#fff;transform:scaleX(.92)">26-03-2026</div>
<svg class="abs" style="left:992.5px;top:553px" width="14" height="14" viewBox="0 0 15 15"><path d="M1.4 1.8 H13.6 V10.6 H8.6 L6 13.4 V10.6 H1.4 Z" fill="none" stroke="#fff" stroke-width="1.1" stroke-linejoin="round"/></svg>

<!-- ===== Share panel ===== -->
<div id="panel" class="abs"><div class="abs" style="left:0;top:-1.5px;width:312px;height:383px">
<div class="t" style="left:12px;top:19px;font-size:13.5px;font-weight:bold;color:#20232a">Share design</div>
<svg class="abs" style="left:178px;top:19px" width="14" height="13" viewBox="0 0 14 13"><path d="M3.4 5.6 V11 M7 1.4 V11 M10.6 4.2 V11 M1 11.8 H13" stroke="#30333b" stroke-width="1.4" stroke-linecap="round"/></svg>
<div class="t" style="left:199px;top:20px;font-size:10.8px;font-weight:bold;color:#30333b">0 visitors</div>
<svg class="abs" style="left:268px;top:17px" width="16" height="16" viewBox="0 0 16 16"><path d="M6.6 1.2 H9.4 L9.9 3.1 L11.4 3.9 L13.2 3.3 L14.6 5.7 L13.2 7 V9 L14.6 10.3 L13.2 12.7 L11.4 12.1 L9.9 12.9 L9.4 14.8 H6.6 L6.1 12.9 L4.6 12.1 L2.8 12.7 L1.4 10.3 L2.8 9 V7 L1.4 5.7 L2.8 3.3 L4.6 3.9 L6.1 3.1 Z" fill="none" stroke="#30333b" stroke-width="1.2" stroke-linejoin="round"/><circle cx="8" cy="8" r="2.4" fill="none" stroke="#30333b" stroke-width="1.2"/></svg>
<div class="t" style="left:12px;top:50.5px;font-size:10.5px;font-weight:bold;color:#30333b">People with access</div>
<div class="abs" style="left:12px;top:70px;width:277px;height:30px;border:1px solid #dddfe4;border-radius:5px;background:#fff;box-shadow:0 1px 1px rgba(0,0,0,.04)"></div>
<svg class="abs" style="left:19.5px;top:77.5px" width="15" height="15" viewBox="0 0 14 14"><circle cx="5.8" cy="5.8" r="4.2" fill="none" stroke="#2d3038" stroke-width="1.3"/><path d="M9 9 L12.6 12.6" stroke="#2d3038" stroke-width="1.4" stroke-linecap="round"/></svg>
<div class="t" style="left:42px;top:79.5px;font-size:11.3px;color:#8a8d95">Add people or groups</div>
<div class="abs" style="left:37px;top:107.5px;width:22px;height:22px;border-radius:11px;border:1px solid #dfe1e6;background:#fff"></div>
<svg class="abs" style="left:44px;top:114px" width="9" height="9" viewBox="0 0 9 9"><path d="M4.5 .8 V8.2 M.8 4.5 H8.2" stroke="#2d3038" stroke-width="1.1" stroke-linecap="round"/></svg>
<div class="abs" style="left:20px;top:108px;width:21px;height:21px;border-radius:11px;background:#0d5a9e"></div>
<div class="t" style="left:26.5px;top:113px;font-size:11px;color:#fff">S</div>
<div class="t" style="left:12px;top:149px;font-size:10.5px;font-weight:bold;color:#30333b">Access level</div>
<div class="abs" style="left:18px;top:171px;width:30px;height:30px;border-radius:15px;border:1px solid #e1e3e8;background:#f4f5f7"></div>
<svg class="abs" style="left:26px;top:178px" width="14" height="16" viewBox="0 0 14 16"><rect x="1.6" y="6.2" width="10.8" height="8.2" rx="1.6" fill="none" stroke="#2d3038" stroke-width="1.2"/><path d="M4 6.2 V4.4 Q4 1.4 7 1.4 Q10 1.4 10 4.4 V6.2" fill="none" stroke="#2d3038" stroke-width="1.2"/><rect x="6.3" y="8.6" width="1.4" height="3.4" rx=".7" fill="#2d3038"/></svg>
<div class="t" style="left:57px;top:181px;font-size:11.1px;color:#2d3038">Only you can access</div>
<svg class="abs" style="left:269px;top:183px" width="10" height="7" viewBox="0 0 10 7"><path d="M1.2 1.4 L5 5.2 L8.8 1.4" fill="none" stroke="#2d3038" stroke-width="1.4" stroke-linecap="round" stroke-linejoin="round"/></svg>
<div class="abs" style="left:12px;top:213px;width:277px;height:30px;border-radius:6px;background:#8b3dff"></div>
<svg class="abs" style="left:112px;top:221px" width="16" height="13" viewBox="0 0 16 13"><rect x="1.2" y="2" width="9" height="6" rx="3" fill="none" stroke="#fff" stroke-width="1.3"/><rect x="5.8" y="5" width="9" height="6" rx="3" fill="none" stroke="#fff" stroke-width="1.3"/></svg>
<div class="t" style="left:136px;top:222px;font-size:10.8px;font-weight:bold;color:#fff">Copy link</div>
<div class="abs" style="left:12px;top:255px;width:277px;height:1px;background:#e4e5e9"></div>
<!-- action row 1 -->
<div class="abs ac" style="left:26px;top:268px"></div>
<svg class="abs" style="left:37px;top:278px" width="14" height="15" viewBox="0 0 14 15"><path d="M7 1.2 V9.6 M3.4 6.2 L7 9.8 L10.6 6.2 M1.4 13.4 H12.6" fill="none" stroke="#2d3038" stroke-width="1.3" stroke-linecap="round" stroke-linejoin="round"/></svg>
<div class="t al" style="left:4px;top:313.8px">Download</div>
<div class="abs ac" style="left:97px;top:268px"></div>
<svg class="abs" style="left:106px;top:279px" width="18" height="14" viewBox="0 0 18 14"><path d="M1.4 2.6 Q1.4 1.4 2.6 1.4 H10.6 V10.6 H1.4 Z M10.6 4 H13.8 Q14.6 4 15 4.8 L16.4 7.4 V10.6 H10.6 M12.6 4.2 V7.2 H16" fill="none" stroke="#2d3038" stroke-width="1.5" stroke-linejoin="round"/><circle cx="5" cy="11" r="1.7" fill="#fff" stroke="#2d3038" stroke-width="1.3"/><circle cx="13.4" cy="11" r="1.7" fill="#fff" stroke="#2d3038" stroke-width="1.3"/></svg>
<div class="t al" style="left:75px;top:313.8px">Print with</div>
<div class="t al" style="left:75px;top:324.8px">Canva</div>
<div class="abs ac" style="left:168px;top:268px"></div>
<svg class="abs" style="left:178px;top:280px" width="16" height="13" viewBox="0 0 16 13"><rect x="1.2" y="1.4" width="9.6" height="6" rx="3" fill="none" stroke="#2d3038" stroke-width="1.5"/><rect x="5.2" y="5.2" width="9.6" height="6" rx="3" fill="none" stroke="#2d3038" stroke-width="1.5"/></svg>
<div class="t al" style="left:146px;top:313.8px">Public</div>
<div class="t al" style="left:146px;top:324.8px">view link</div>
<div class="abs ac" style="left:239px;top:268px"></div>
<svg class="abs" style="left:248px;top:277px" width="18" height="18" viewBox="0 0 18 18"><defs><radialGradient id="ig" cx=".3" cy="1.05" r="1.2"><stop offset="0" stop-color="#fdc94f"/><stop offset=".25" stop-color="#f8762c"/><stop offset=".5" stop-color="#e8256f"/><stop offset=".75" stop-color="#b52bb5"/><stop offset="1" stop-color="#5b4fe0"/></radialGradient></defs><circle cx="9" cy="9" r="8.6" fill="url(#ig)"/><rect x="4.6" y="4.6" width="8.8" height="8.8" rx="2.6" fill="none" stroke="#fff" stroke-width="1.1"/><circle cx="9" cy="9" r="2.1" fill="none" stroke="#fff" stroke-width="1.1"/><circle cx="11.6" cy="6.4" r=".6" fill="#fff"/></svg>
<div class="t al" style="left:217px;top:313.8px">Instagram</div>
<!-- action row 2 -->
<div class="abs ac" style="left:26px;top:347px"></div>
<svg class="abs" style="left:36px;top:357px" width="16" height="16" viewBox="0 0 16 16"><path d="M8 .8 A7.2 7.2 0 1 1 4.2 14.1 L.8 15.2 L1.9 11.9 A7.2 7.2 0 0 1 8 .8 Z" fill="#2bb741"/><path d="M5.4 4.2 Q4.4 4.6 4.6 6.2 Q5.4 9.6 9.2 11.2 Q10.8 11.8 11.6 10.6 Q12 9.8 11.4 9.4 L10 8.8 Q9.6 8.8 9.2 9.4 Q7.4 8.6 6.8 7 Q7.4 6.6 7.2 6.2 L6.6 4.6 Q6.2 4 5.4 4.2 Z" fill="#fff"/></svg>
<div class="abs ac" style="left:97px;top:347px"></div>
<svg class="abs" style="left:106px;top:359px" width="18" height="13" viewBox="0 0 18 13"><rect x=".4" y=".4" width="17.2" height="12.2" rx="3.2" fill="#e62117"/><path d="M7.2 3.6 L11.8 6.5 L7.2 9.4 Z" fill="#fff"/></svg>
<div class="abs ac" style="left:168px;top:347px"></div>
<svg class="abs" style="left:177px;top:359px" width="19" height="13" viewBox="0 0 19 13"><path d="M1.6 9 Q1.4 5 3.4 2.6 Q5.2 .8 7 3 Q8.4 4.8 9.5 6.6 Q10.6 4.8 12 3 Q13.8 .8 15.6 2.6 Q17.6 5 17.4 9 Q17.2 11.4 15.2 11.2 Q13.6 11 11.6 8.2 L9.5 5 L7.4 8.2 Q5.4 11 3.8 11.2 Q1.8 11.4 1.6 9 Z" fill="none" stroke="#1877f2" stroke-width="1.8" stroke-linejoin="round"/></svg>
<div class="abs ac" style="left:239px;top:347px"></div>
<svg class="abs" style="left:250px;top:363px" width="14" height="4" viewBox="0 0 14 4"><circle cx="2" cy="2" r="1.4" fill="#20232a"/><circle cx="7" cy="2" r="1.4" fill="#20232a"/><circle cx="12" cy="2" r="1.4" fill="#20232a"/></svg>
<!-- scrollbar -->
<div class="abs" style="left:303px;top:0;width:9px;height:383px;background:#fff"></div>
<div class="abs" style="left:303px;top:14px;width:7px;height:322px;border-radius:3.5px;background:#8c8c8c"></div>
<svg class="abs" style="left:304px;top:5px" width="7" height="5" viewBox="0 0 7 5"><path d="M.6 4.4 L3.5 .8 L6.4 4.4 Z" fill="#8a8a8a"/></svg>
<svg class="abs" style="left:304px;top:371px" width="7" height="5" viewBox="0 0 7 5"><path d="M.6 .6 L3.5 4.2 L6.4 .6 Z" fill="#6a6a6a"/></svg>
</div></div>

<!-- ===== Yellow annotation ===== -->
<svg class="abs" style="left:550px;top:390px" width="140" height="72" viewBox="550 390 140 72"><path d="M557 414.2 L628 418.4 L627.4 396 L683.8 425.2 L631.6 456.6 L628.4 434.6 L557 438.8 Z" fill="#fdf705" stroke="#fdf705" stroke-width="1" stroke-linejoin="round"/></svg>
<div class="abs" style="left:701.3px;top:385px;width:99.4px;height:84.3px;border:9.5px solid #faf528;border-radius:18px"></div>
</body>
</html>
